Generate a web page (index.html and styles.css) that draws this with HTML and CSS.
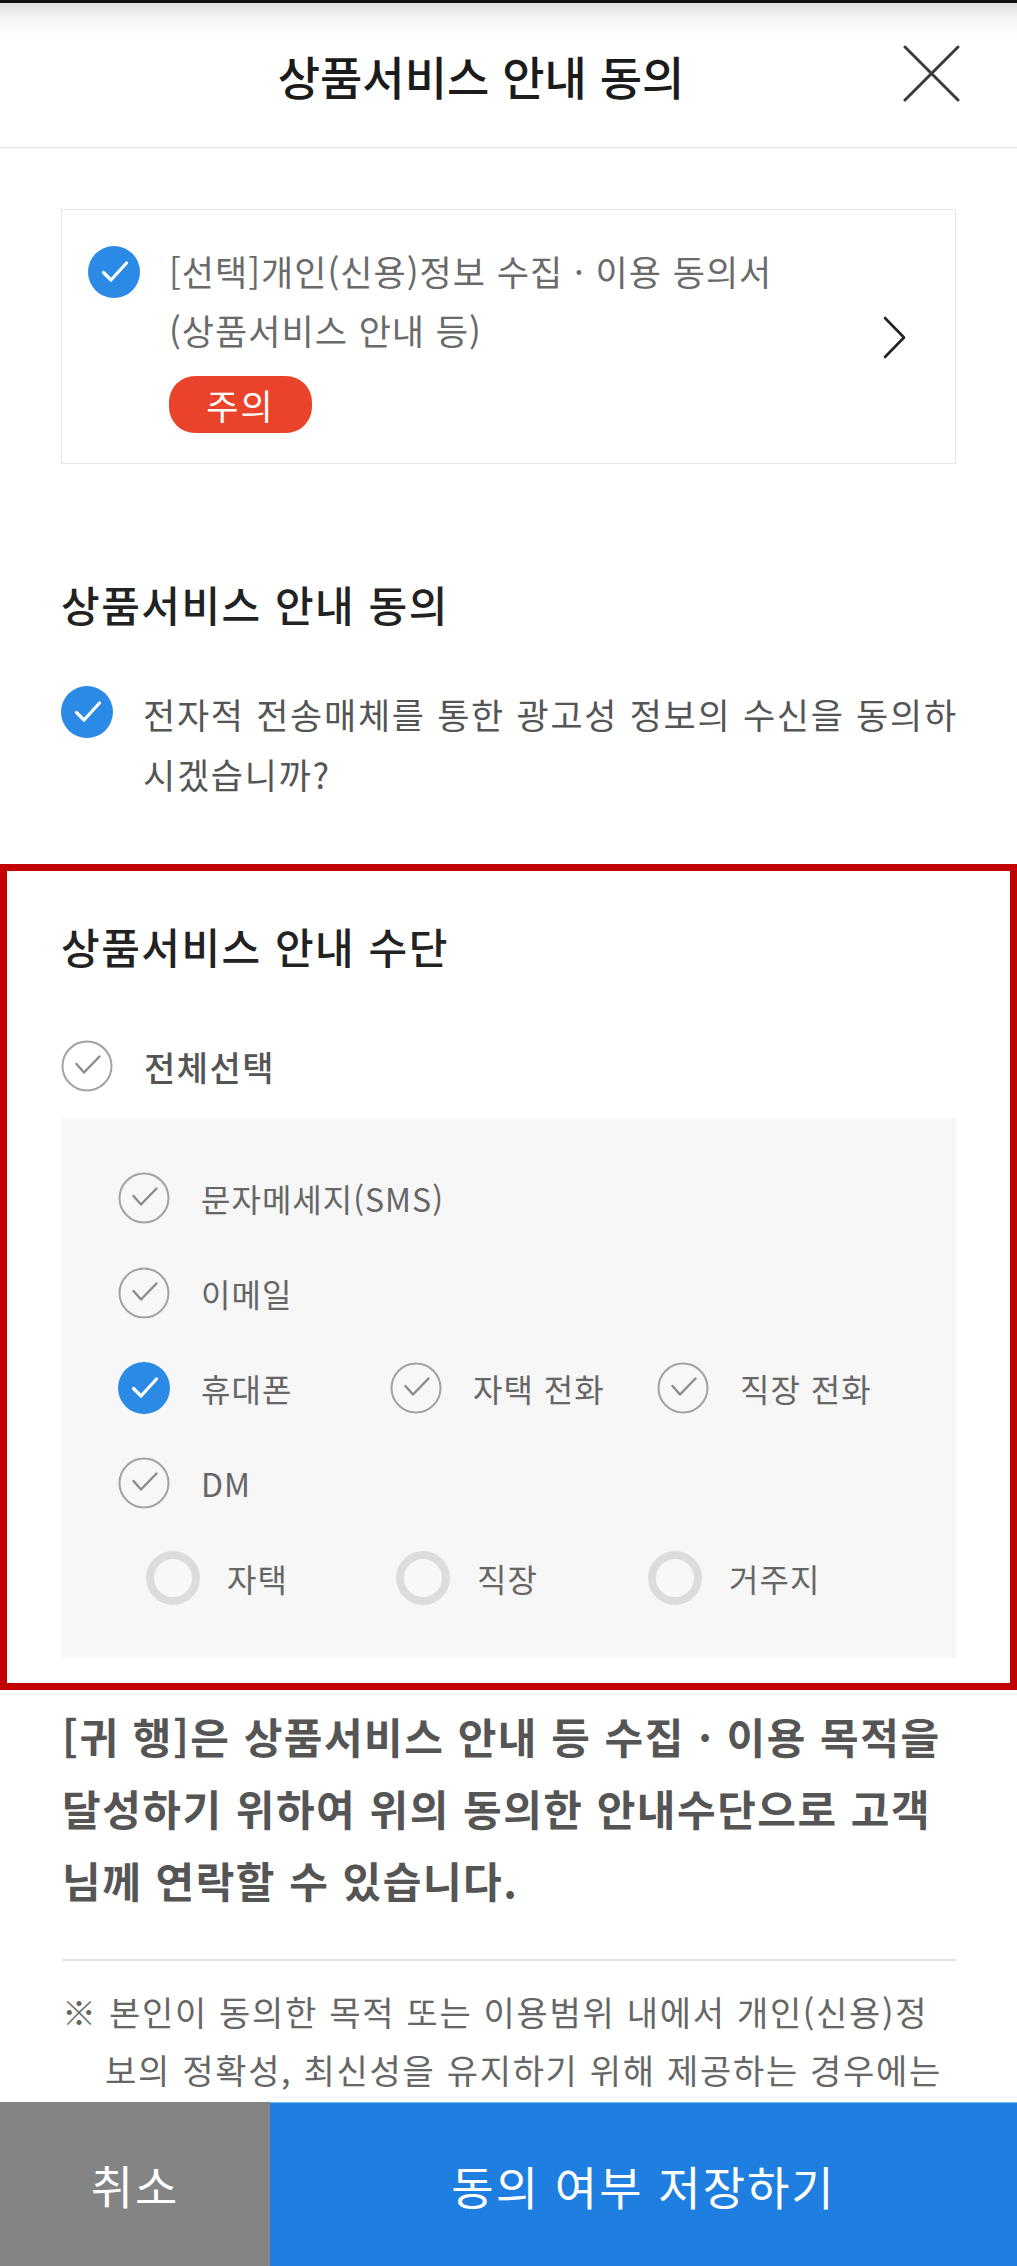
FILE: index.html
```html
<!DOCTYPE html>
<html lang="ko">
<head>
<meta charset="utf-8">
<title>상품서비스 안내 동의</title>
<link rel="stylesheet" href="styles.css">
</head>
<body>
<header class="header">
  <h1 class="header-title">상품서비스 안내 동의</h1>
  <button class="close-btn" type="button" aria-label="닫기">
    <svg viewBox="0 0 57 57" width="57" height="57"><path d="M2 2 L55 55 M55 2 L2 55" stroke="#3a3a3a" stroke-width="3" fill="none" stroke-linecap="round"/></svg>
  </button>
</header>

<main>
  <section class="intro">
    <div class="consent-card">
      <span class="check check-on">
        <svg viewBox="0 0 52 52" width="52" height="52"><circle cx="26" cy="26" r="26" fill="#2b8ae6"/><path d="M15.5 26.5 L23 34 L38.5 17" stroke="#fff" stroke-width="3.2" fill="none" stroke-linecap="round" stroke-linejoin="round"/></svg>
      </span>
      <div class="consent-body">
        <p class="consent-text">[선택]개인(신용)정보 수집 · 이용 동의서<br>(상품서비스 안내 등)</p>
        <span class="badge">주의</span>
      </div>
      <span class="chevron">
        <svg viewBox="0 0 23 43" width="23" height="43"><path d="M2 2 L21 21.5 L2 41" stroke="#222" stroke-width="2.6" fill="none" stroke-linecap="round" stroke-linejoin="round"/></svg>
      </span>
    </div>

    <h2 class="section-title section-title-first">상품서비스 안내 동의</h2>
    <div class="agree-row">
      <span class="check check-on">
        <svg viewBox="0 0 52 52" width="52" height="52"><circle cx="26" cy="26" r="26" fill="#2b8ae6"/><path d="M15.5 26.5 L23 34 L38.5 17" stroke="#fff" stroke-width="3.2" fill="none" stroke-linecap="round" stroke-linejoin="round"/></svg>
      </span>
      <p class="agree-text">전자적 전송매체를 통한 광고성 정보의 수신을 동의하<br>시겠습니까?</p>
    </div>
  </section>

  <section class="means">
    <h2 class="section-title">상품서비스 안내 수단</h2>
    <div class="select-all">
      <span class="check">
        <svg viewBox="0 0 52 52" width="52" height="52"><circle cx="26" cy="26" r="24.5" fill="none" stroke="#a3a3a3" stroke-width="2"/><path d="M15.5 24 L23 32.5 L38.5 16.5" stroke="#8c8c8c" stroke-width="2.4" fill="none" stroke-linecap="round" stroke-linejoin="round"/></svg>
      </span>
      <span class="select-all-label">전체선택</span>
    </div>

    <div class="means-panel">
      <div class="opt-row">
        <label class="opt">
          <span class="check"><svg viewBox="0 0 52 52" width="52" height="52"><circle cx="26" cy="26" r="24.5" fill="none" stroke="#a3a3a3" stroke-width="2"/><path d="M15.5 24 L23 32.5 L38.5 16.5" stroke="#8c8c8c" stroke-width="2.4" fill="none" stroke-linecap="round" stroke-linejoin="round"/></svg></span>
          <span class="opt-label">문자메세지(SMS)</span>
        </label>
      </div>
      <div class="opt-row">
        <label class="opt">
          <span class="check"><svg viewBox="0 0 52 52" width="52" height="52"><circle cx="26" cy="26" r="24.5" fill="none" stroke="#a3a3a3" stroke-width="2"/><path d="M15.5 24 L23 32.5 L38.5 16.5" stroke="#8c8c8c" stroke-width="2.4" fill="none" stroke-linecap="round" stroke-linejoin="round"/></svg></span>
          <span class="opt-label">이메일</span>
        </label>
      </div>
      <div class="opt-row opt-row-phones">
        <label class="opt">
          <span class="check"><svg viewBox="0 0 52 52" width="52" height="52"><circle cx="26" cy="26" r="26" fill="#2b8ae6"/><path d="M15.5 26.5 L23 34 L38.5 17" stroke="#fff" stroke-width="3.2" fill="none" stroke-linecap="round" stroke-linejoin="round"/></svg></span>
          <span class="opt-label">휴대폰</span>
        </label>
        <label class="opt">
          <span class="check"><svg viewBox="0 0 52 52" width="52" height="52"><circle cx="26" cy="26" r="24.5" fill="none" stroke="#a3a3a3" stroke-width="2"/><path d="M15.5 24 L23 32.5 L38.5 16.5" stroke="#8c8c8c" stroke-width="2.4" fill="none" stroke-linecap="round" stroke-linejoin="round"/></svg></span>
          <span class="opt-label">자택 전화</span>
        </label>
        <label class="opt">
          <span class="check"><svg viewBox="0 0 52 52" width="52" height="52"><circle cx="26" cy="26" r="24.5" fill="none" stroke="#a3a3a3" stroke-width="2"/><path d="M15.5 24 L23 32.5 L38.5 16.5" stroke="#8c8c8c" stroke-width="2.4" fill="none" stroke-linecap="round" stroke-linejoin="round"/></svg></span>
          <span class="opt-label">직장 전화</span>
        </label>
      </div>
      <div class="opt-row">
        <label class="opt">
          <span class="check"><svg viewBox="0 0 52 52" width="52" height="52"><circle cx="26" cy="26" r="24.5" fill="none" stroke="#a3a3a3" stroke-width="2"/><path d="M15.5 24 L23 32.5 L38.5 16.5" stroke="#8c8c8c" stroke-width="2.4" fill="none" stroke-linecap="round" stroke-linejoin="round"/></svg></span>
          <span class="opt-label">DM</span>
        </label>
      </div>
      <div class="opt-row opt-row-radios">
        <label class="opt opt-radio">
          <span class="radio"></span>
          <span class="opt-label">자택</span>
        </label>
        <label class="opt opt-radio">
          <span class="radio"></span>
          <span class="opt-label">직장</span>
        </label>
        <label class="opt opt-radio">
          <span class="radio"></span>
          <span class="opt-label">거주지</span>
        </label>
      </div>
    </div>
  </section>

  <section class="notice">
    <p class="notice-strong">[귀 행]은 상품서비스 안내 등 수집 · 이용 목적을<br>달성하기 위하여 위의 동의한 안내수단으로 고객<br>님께 연락할 수 있습니다.</p>
    <hr class="divider">
    <p class="notice-note">※ 본인이 동의한 목적 또는 이용범위 내에서 개인(신용)정<br>보의 정확성, 최신성을 유지하기 위해 제공하는 경우에는</p>
  </section>
</main>

<footer class="actions">
  <button class="btn btn-cancel" type="button">취소</button>
  <button class="btn btn-save" type="button">동의 여부 저장하기</button>
</footer>
</body>
</html>
```

FILE: styles.css
```css
* {
  box-sizing: border-box;
}

html, body {
  margin: 0;
  padding: 0;
  background: #fff;
}

body {
  width: 1017px;
  font-family: "Noto Sans CJK KR", "Noto Sans", sans-serif;
  color: #222;
}

p, h1, h2 {
  margin: 0;
}

/* ---------- header ---------- */
.header {
  position: relative;
  height: 148px;
  padding-right: 55px;
  border-top: 3px solid #111;
  border-bottom: 1px solid #e4e4e4;
  background: linear-gradient(#dedede 0, #f3f3f3 14px, #fff 32px);
  box-shadow: 0 1px 3px rgba(0, 0, 0, 0.06);
  display: flex;
  align-items: center;
  justify-content: center;
}

.header-title {
  font-size: 46px;
  font-weight: 500;
  line-height: 60px;
  color: #1b1b1b;
  letter-spacing: 0;
}

.close-btn {
  position: absolute;
  right: 57px;
  top: 42px;
  width: 57px;
  height: 57px;
  padding: 0;
  border: 0;
  background: none;
}

.close-btn svg {
  display: block;
}

/* ---------- check icons ---------- */
.check {
  flex: none;
  width: 52px;
  height: 52px;
}

.check svg {
  display: block;
}

.radio {
  flex: none;
  width: 54px;
  height: 54px;
  border-radius: 50%;
  border: 8px solid #dcdcdc;
  background: #f8f8f8;
}

/* ---------- intro ---------- */
.intro {
  padding: 61px 61px 0;
}

.consent-card {
  display: flex;
  align-items: flex-start;
  border: 1px solid #e6e6e6;
  padding: 31px 49px 30px 26px;
}

.consent-card .check {
  margin-top: 5px;
}

.consent-body {
  flex: 1;
  margin-left: 29px;
}

.consent-text {
  font-size: 35px;
  line-height: 59px;
  letter-spacing: 1px;
  color: #6a6a6a;
}

.badge {
  display: flex;
  align-items: center;
  justify-content: center;
  width: 143px;
  height: 57px;
  margin-top: 17px;
  border-radius: 26px;
  background: #e9442b;
  color: #fff;
  font-size: 35px;
  letter-spacing: 2px;
  line-height: 1;
}

.chevron {
  align-self: center;
  width: 23px;
  height: 43px;
}

.chevron svg {
  display: block;
}

.section-title {
  font-size: 42px;
  font-weight: 500;
  line-height: 60px;
  color: #222;
  letter-spacing: 1.5px;
}

.section-title-first {
  margin-top: 110px;
}

.agree-row {
  display: flex;
  align-items: flex-start;
  gap: 30px;
  margin-top: 50px;
}

.agree-row .check {
  margin-top: 2px;
}

.agree-text {
  font-size: 35px;
  line-height: 60px;
  letter-spacing: 1.7px;
  color: #555;
  white-space: nowrap;
}

/* ---------- contact means ---------- */
.means {
  margin-top: 60px;
  border: 7px solid #c30000;
  padding: 45px 54px 25px;
}

.select-all {
  display: flex;
  align-items: center;
  gap: 31px;
  height: 60px;
  margin-top: 60px;
}

.select-all-label {
  font-size: 34px;
  font-weight: 500;
  letter-spacing: 1.5px;
  color: #555;
}

.means-panel {
  margin-top: 22px;
  background: #f7f7f7;
  padding: 50px 0 50px 57px;
  display: flex;
  flex-direction: column;
  gap: 35px;
}

.opt-row {
  display: flex;
  height: 60px;
  align-items: center;
}

.opt-row-phones {
  display: grid;
  grid-template-columns: 272px 267px auto;
}

.opt-row-radios {
  display: grid;
  grid-template-columns: 250px 252px auto;
  padding-left: 28px;
}

.opt {
  display: flex;
  align-items: center;
  gap: 31px;
}

.opt-radio {
  gap: 27px;
}

.opt-label {
  font-size: 32px;
  letter-spacing: 1px;
  color: #666;
  white-space: nowrap;
}

/* ---------- notice ---------- */
.notice {
  padding: 10px 61px 0 62px;
}

.notice-strong {
  font-size: 42px;
  font-weight: 700;
  line-height: 72px;
  letter-spacing: 1.5px;
  color: #555;
  white-space: nowrap;
}

.divider {
  margin: 43px 0 0;
  border: 0;
  border-top: 2px solid #e4e4e4;
}

.notice-note {
  margin-top: 22px;
  padding-left: 43px;
  text-indent: -43px;
  font-size: 34px;
  line-height: 58px;
  letter-spacing: 1.7px;
  color: #666;
  white-space: nowrap;
}

/* ---------- bottom action bar ---------- */
.actions {
  position: fixed;
  left: 0;
  right: 0;
  bottom: 0;
  height: 164px;
  display: flex;
}

.btn {
  border: 0;
  margin: 0;
  padding: 0;
  color: #fff;
  font-family: inherit;
  font-size: 46px;
  letter-spacing: 2px;
  line-height: 1;
}

.btn-cancel {
  width: 270px;
  background: #848484;
}

.btn-save {
  flex: 1;
  background: #1f7fe0;
  border-top: 1px solid #6fc3f0;
}
```
